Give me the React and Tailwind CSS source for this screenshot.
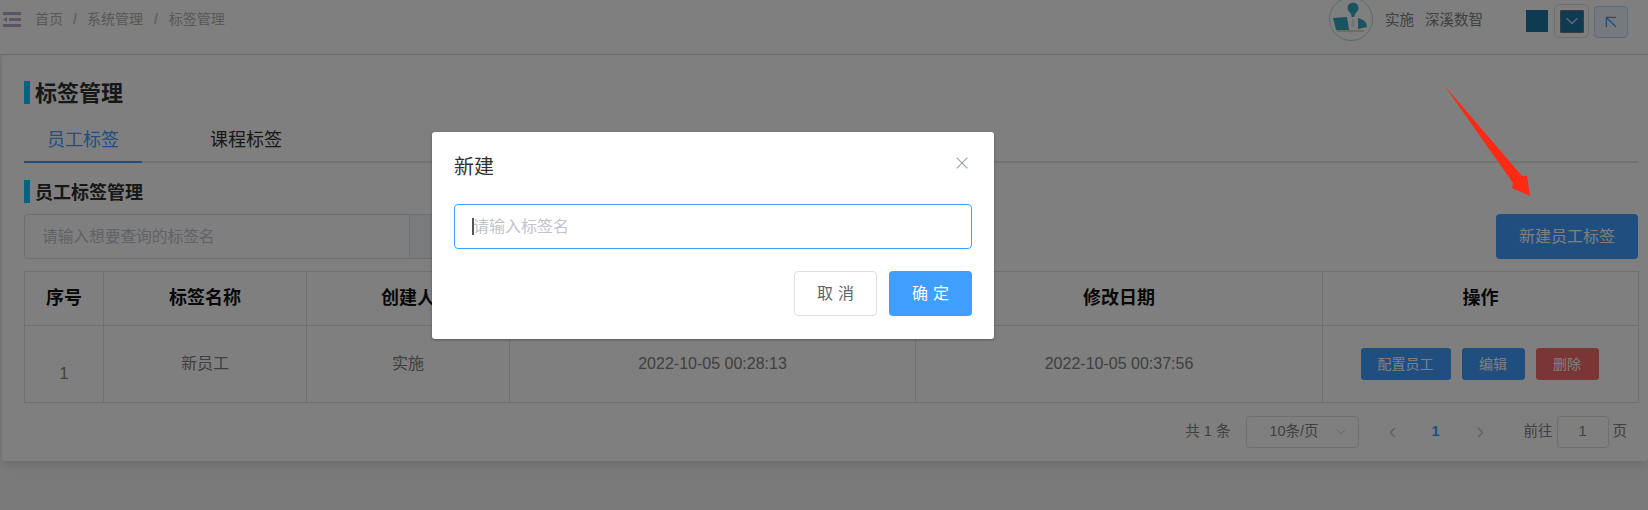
import { ChevronDown, ChevronLeft, ChevronRight, ArrowUpLeft, X } from 'lucide-react';

const SANS = "font-['Liberation_Sans','Noto_Sans_CJK_SC',sans-serif]";

// Person-with-laptop avatar from the top bar
function Avatar() {
  return (
    <svg width="44" height="44" viewBox="0 0 44 44" className="shrink-0">
      <circle cx="22" cy="22" r="21.5" fill="#ffffff" stroke="#b8d4d4" />
      <circle cx="24" cy="11" r="5.5" fill="#34a8c4" />
      <path d="M21 14 L27 14 L25.2 20 L22.8 20 Z" fill="#34a8c4" />
      <path d="M4 21 L18 20 L20 33 L7 33 Z" fill="#34a8c4" />
      <path d="M29 21 C34 22 38 25 38 30 L29 32 Z" fill="#34a8c4" />
      <path d="M23 22 L25 22 L25.5 30 L22.5 30 Z" fill="#d8e8e8" />
      <rect x="8" y="33.5" width="27" height="1" fill="#b8c070" />
    </svg>
  );
}

function MenuIcon() {
  return (
    <svg width="18" height="15" viewBox="0 0 18 15" className="shrink-0">
      <rect x="0" y="0" width="18" height="3" fill="#b9a8c8" />
      <rect x="6" y="6" width="12" height="3" fill="#b9a8c8" />
      <path d="M0 7.5 L4 5 L4 10 Z" fill="#b9a8c8" />
      <rect x="0" y="12" width="18" height="3" fill="#b9a8c8" />
    </svg>
  );
}

function SectionTitle({ className, children }) {
  return (
    <div className="flex items-center h-[23px]">
      <span className="w-[6px] h-[23px] bg-[#08c8ff]" />
      <span className={`ml-[5px] font-bold text-[#2f2f2f] ${className}`}>{children}</span>
    </div>
  );
}

function ActionButton({ danger, className, children }) {
  return (
    <span className={`h-[32px] flex items-center justify-center rounded-[3px] text-[14px] text-white ${danger ? 'bg-[#f56c6c]' : 'bg-[#409eff]'} ${className}`}>
      {children}
    </span>
  );
}

export default function App() {
  return (
    <div className={`relative w-[1648px] h-[510px] overflow-hidden bg-[#f5f5f5] flex flex-col ${SANS}`}>
      {/* Top bar */}
      <header className="h-[55px] shrink-0 bg-white border-b border-[#dcdcdc] flex items-start overflow-hidden">
        <div className="ml-[3px] mt-[12px]"><MenuIcon /></div>
        <nav className="ml-[14px] mt-[9px] flex text-[14px] leading-[20px] text-[#b0b0b0]">
          <span>首页</span>
          <span className="mx-[10px] font-bold text-[#c0c4cc]">/</span>
          <span>系统管理</span>
          <span className="mx-[11px] font-bold text-[#c0c4cc]">/</span>
          <span>标签管理</span>
        </nav>
        <div className="ml-auto flex items-start">
          <div className="-mt-[3px]"><Avatar /></div>
          <span className="ml-[12px] mt-[10px] text-[14.5px] leading-[20px] text-[#808080]">实施</span>
          <span className="ml-[11px] mt-[10px] text-[14.5px] leading-[20px] text-[#808080]">深溪数智</span>
          <span className="ml-[43px] mt-[10px] w-[22px] h-[22px] bg-[#1e76a4]" />
          <span className="ml-[6px] mt-[4px] w-[35px] h-[34px] rounded-[5px] border border-[#dcdfe6] flex items-center justify-center">
            <span className="w-[24px] h-[23px] bg-[#1e76a4] border border-[#777777] rounded-[1px] flex items-center justify-center text-[#c8d8e0]">
              <ChevronDown size={20} strokeWidth={1.5} />
            </span>
          </span>
          <span className="ml-[5px] mr-[20px] mt-[6px] w-[34px] h-[32px] rounded-[4px] border border-[#b3d8ff] bg-[#ecf5ff] flex items-center justify-center text-[#409eff]">
            <ArrowUpLeft size={22} strokeWidth={1.5} />
          </span>
        </div>
      </header>

      {/* Main card */}
      <main className="ml-[2px] h-[406px] bg-white rounded-[4px] shadow-[0_4px_12px_rgba(0,0,0,0.12)] pl-[22px] pr-[10px] pt-[26px]">
        <SectionTitle className="text-[22px] leading-[23px] translate-y-[1px]">标签管理</SectionTitle>

        <div className="mt-[15px] flex h-[44px] border-b-2 border-[#e4e7ed] text-[18px]">
          <span className="relative w-[118px] h-[42px] text-center leading-[42px] text-[#409eff]">
            员工标签
            <span className="absolute left-0 right-0 -bottom-[2px] h-[2px] bg-[#409eff]" />
          </span>
          <span className="ml-[68px] leading-[42px] text-[#303133]">课程标签</span>
        </div>

        <div className="mt-[17px]">
          <SectionTitle className="text-[18px] leading-[23px] translate-y-[2px]">员工标签管理</SectionTitle>
        </div>

        <div className="mt-[11px] flex items-start h-[46px]">
          <div className="flex w-[500px] h-[45px] rounded-[4px] border border-[#dcdfe6] overflow-hidden">
            <span className="w-[385px] pl-[17px] border-r border-[#dcdfe6] text-[15.7px] leading-[43px] text-[#c0c4cc]">请输入想要查询的标签名</span>
            <span className="flex-1 bg-[#f5f7fa]" />
          </div>
          <span className="ml-auto w-[142px] h-[45px] rounded-[4px] bg-[#409eff] flex items-center justify-center text-[16px] text-white">新建员工标签</span>
        </div>

        <table className="mt-[11px] w-[1614px] table-fixed border-collapse text-[16px] text-[#808080]">
          <colgroup>
            <col className="w-[79px]" />
            <col className="w-[203px]" />
            <col className="w-[203px]" />
            <col className="w-[406px]" />
            <col className="w-[407px]" />
            <col className="w-[316px]" />
          </colgroup>
          <thead>
            <tr className="h-[54px] text-[18px] font-bold text-[#111111]">
              {['序号', '标签名称', '创建人', '创建日期', '修改日期', '操作'].map(h => (
                <th key={h} className="border border-[#dfe3ea] font-bold">{h}</th>
              ))}
            </tr>
          </thead>
          <tbody>
            <tr className="h-[77px] text-center">
              <td className="border border-[#dfe3ea] pt-[20px]">1</td>
              <td className="border border-[#dfe3ea]">新员工</td>
              <td className="border border-[#dfe3ea]">实施</td>
              <td className="border border-[#dfe3ea]">2022-10-05 00:28:13</td>
              <td className="border border-[#dfe3ea]">2022-10-05 00:37:56</td>
              <td className="border border-[#dfe3ea]">
                <div className="flex justify-center gap-[11px] pr-[2px]">
                  <ActionButton className="w-[90px]">配置员工</ActionButton>
                  <ActionButton className="w-[63px]">编辑</ActionButton>
                  <ActionButton danger className="w-[63px]">删除</ActionButton>
                </div>
              </td>
            </tr>
          </tbody>
        </table>

        {/* Pagination */}
        <div className="mt-[13px] w-[1614px] flex justify-end items-center h-[32px] pr-[11px] text-[14.5px] text-[#808080]">
          <span>共 1 条</span>
          <span className="ml-[16px] w-[113px] h-[32px] rounded-[4px] border border-[#dcdfe6] flex items-center pl-[22px] pr-[9px]">
            10条/页
            <ChevronDown size={16} strokeWidth={1.25} className="ml-auto text-[#c0c4cc]" />
          </span>
          <ChevronLeft size={17} strokeWidth={2} className="ml-[25px] text-[#c0c4cc]" />
          <span className="ml-[30px] font-bold text-[#409eff]">1</span>
          <ChevronRight size={17} strokeWidth={2} className="ml-[32px] text-[#c0c4cc]" />
          <span className="ml-[35px]">前往</span>
          <span className="ml-[4px] w-[52px] h-[32px] rounded-[4px] border border-[#dcdfe6] flex items-center justify-center">1</span>
          <span className="ml-[4px]">页</span>
        </div>
      </main>

      {/* Modal layer */}
      <div className="absolute inset-0 bg-black/50 pl-[432px] pt-[132px]">
        <div className="w-[562px] h-[207px] bg-white rounded-[3px] shadow-[0_1px_3px_rgba(0,0,0,0.3)] px-[22px] pt-[22px]">
          <div className="flex items-center justify-between h-[24px]">
            <span className="text-[20px] text-[#303133] translate-y-[1px]">新建</span>
            <X size={20} strokeWidth={1.25} className="-translate-y-[3px] text-[#909399]" />
          </div>
          <div className="relative mt-[26px]">
            <input
              readOnly
              placeholder="请输入标签名"
              className="w-full h-[45px] rounded-[4px] border border-[#409eff] pl-[18px] text-[16px] outline-none placeholder:text-[#c0c4cc]"
            />
            <span className="absolute left-[18px] top-[14px] w-[2px] h-[17px] bg-[#555555]" />
          </div>
          <div className="mt-[22px] flex justify-end gap-[12px]">
            <span className="w-[83px] h-[45px] pl-[5px] rounded-[4px] border border-[#dcdfe6] flex items-center justify-center text-[16px] tracking-[5px] text-[#606266]">取消</span>
            <span className="w-[83px] h-[45px] pl-[5px] rounded-[4px] bg-[#409eff] flex items-center justify-center text-[16px] tracking-[5px] text-white">确定</span>
          </div>
        </div>
      </div>

      {/* Red annotation arrow drawn over the screenshot */}
      <svg width="100" height="120" viewBox="0 0 100 120" className="absolute left-[1440px] top-[82px]">
        <path d="M4 3 L73 101 L72 106 L90 114 L87 94 L82 94 Z" fill="#ff2a14" />
      </svg>
    </div>
  );
}
